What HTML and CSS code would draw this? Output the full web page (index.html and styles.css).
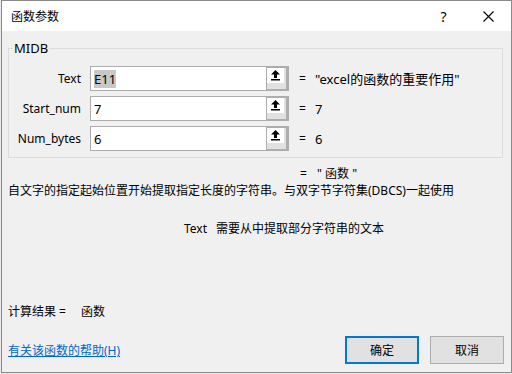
FILE: index.html
```html
<!DOCTYPE html>
<html lang="zh-CN">
<head>
  <meta charset="UTF-8" />
  <title>函数参数</title>
  <link rel="stylesheet" href="styles.css">
</head>
<body>

  <div class="dialog">
    <div class="titlebar">
      <span class="title">函数参数</span>
      <div class="title-buttons">
        <span class="title-btn help">?</span>
        <span class="title-btn close">
          <svg width="11" height="11" viewBox="0 0 11 11">
            <path d="M0.5 0.5 L10.5 10.5 M10.5 0.5 L0.5 10.5" stroke="#000" stroke-width="1.1" fill="none"/>
          </svg>
        </span>
      </div>
    </div>

    <div class="content">
      <fieldset class="args">
        <legend>MIDB</legend>
        <div class="arg-row">
          <label>Text</label>
          <div class="field">
            <div class="field-input"><span class="selected">E11</span></div>
            <span class="ref-btn"><span class="ref-icon"><svg width="11" height="11" viewBox="0 0 11 11"><path d="M5.5 0 L10 4.5 L7 4.5 L7 8 L4 8 L4 4.5 L1 4.5 Z" fill="#000"/><rect x="1" y="9" width="9" height="1.5" fill="#000"/></svg></span></span>
          </div>
          <span class="eq">=</span>
          <span class="val">"excel的函数的重要作用"</span>
        </div>
        <div class="arg-row">
          <label>Start_num</label>
          <div class="field">
            <div class="field-input">7</div>
            <span class="ref-btn"><span class="ref-icon"><svg width="11" height="11" viewBox="0 0 11 11"><path d="M5.5 0 L10 4.5 L7 4.5 L7 8 L4 8 L4 4.5 L1 4.5 Z" fill="#000"/><rect x="1" y="9" width="9" height="1.5" fill="#000"/></svg></span></span>
          </div>
          <span class="eq">=</span>
          <span class="val">7</span>
        </div>
        <div class="arg-row">
          <label>Num_bytes</label>
          <div class="field">
            <div class="field-input">6</div>
            <span class="ref-btn"><span class="ref-icon"><svg width="11" height="11" viewBox="0 0 11 11"><path d="M5.5 0 L10 4.5 L7 4.5 L7 8 L4 8 L4 4.5 L1 4.5 Z" fill="#000"/><rect x="1" y="9" width="9" height="1.5" fill="#000"/></svg></span></span>
          </div>
          <span class="eq">=</span>
          <span class="val">6</span>
        </div>
      </fieldset>

      <div class="eq-line"><span class="eq">=</span><span>" 函数 "</span></div>
      <div class="desc">自文字的指定起始位置开始提取指定长度的字符串。与双字节字符集(DBCS)一起使用</div>
      <div class="param-desc"><span class="param-name">Text</span>需要从中提取部分字符串的文本</div>

      <div class="result">计算结果 =<span class="result-val">函数</span></div>

      <div class="footer">
        <a href="#" class="help-link">有关该函数的帮助(H)</a>
        <div class="buttons">
          <button class="btn primary">确定</button>
          <button class="btn">取消</button>
        </div>
      </div>
    </div>
  </div>

</body>
</html>
```

FILE: styles.css
```css
body {
  margin: 0;
  padding: 0;
  background-color: #e8e8e8;
  font-family: "Noto Sans", "Noto Sans CJK SC", sans-serif;
  font-size: 12px;
  color: #000;
}

.dialog {
  width: 511px;
  height: 373px;
  margin-left: 1px;
  box-sizing: border-box;
  border: 1px solid #8a8a8a;
  background-color: #f0f0f0;
  display: flex;
  flex-direction: column;
}

.titlebar {
  height: 30px;
  background-color: #fff;
  display: flex;
  align-items: center;
  justify-content: space-between;
}

.title {
  padding-left: 9px;
  font-size: 12px;
}

.title-buttons {
  display: flex;
  height: 100%;
}

.title-btn {
  width: 45px;
  display: flex;
  align-items: center;
  justify-content: center;
}

.help {
  font-size: 14px;
}

.content {
  flex: 1;
  padding: 9px 7px 0 6px;
  display: flex;
  flex-direction: column;
}

.args {
  margin: 0;
  padding: 10px 0 6px 0;
  border: 1px solid #dcdcdc;
  width: 495px;
  box-sizing: border-box;
  display: flex;
  flex-direction: column;
  gap: 5px;
}

.args legend {
  padding: 0 1px;
  margin-left: 4px;
  line-height: 16px;
  font-size: 13px;
}

.arg-row {
  display: grid;
  grid-template-columns: 81px 199px 26px 1fr;
  align-items: center;
  height: 25px;
}

.arg-row label {
  text-align: right;
  padding-right: 9px;
}

.field {
  display: flex;
  height: 25px;
  box-sizing: border-box;
}

.field-input {
  flex: 1;
  background-color: #fff;
  border: 1px solid #acacac;
  border-right: none;
  padding-left: 3px;
  display: flex;
  align-items: center;
  font-size: 13px;
}

.selected {
  background-color: #c8c8c8;
}

.ref-btn {
  width: 19px;
  box-sizing: content-box;
  border: 2px solid #adadad;
  border-left: 1px solid #adadad;
  border-right-width: 3px;
  background-color: #e1e1e1;
}

.ref-icon {
  display: flex;
  width: 17px;
  height: 15px;
  background-color: #fff;
  align-items: center;
  justify-content: center;
}

.eq {
  padding-left: 10px;
}

.val {
  font-size: 13px;
}

.eq-line {
  margin-top: 8px;
  padding-left: 292px;
  height: 16px;
  line-height: 16px;
  display: flex;
}

.eq-line .eq {
  width: 17px;
  padding-left: 0;
}

.desc {
  margin-top: 1px;
  height: 16px;
  line-height: 16px;
}

.param-desc {
  margin-top: 22px;
  line-height: 16px;
  padding-left: 176px;
}

.param-name {
  margin-right: 9px;
}

.result {
  margin-top: 67px;
  line-height: 16px;
}

.result-val {
  margin-left: 15px;
}

.footer {
  margin-top: 16px;
  display: flex;
  justify-content: space-between;
  align-items: center;
}

.help-link {
  color: #0066cc;
  text-decoration: underline;
}

.buttons {
  display: flex;
  gap: 11px;
}

.btn {
  width: 74px;
  height: 28px;
  font-family: inherit;
  font-size: 12px;
  background-color: #e1e1e1;
  border: 1px solid #adadad;
  color: #000;
  padding: 0;
}

.btn.primary {
  border: 2px solid #0078d7;
}
```
